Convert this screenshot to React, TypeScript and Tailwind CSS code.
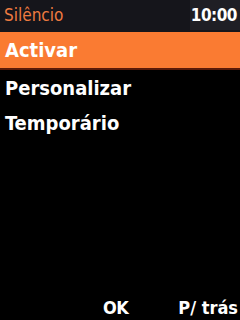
const items = ["Activar", "Personalizar", "Temporário"];

export default function App() {
  return (
    <div
      className="w-[240px] h-[320px] bg-black flex flex-col overflow-hidden"
      style={{ fontFamily: '"DejaVu Sans Condensed", "DejaVu Sans", sans-serif' }}
    >
      {/* barra de título */}
      <div className="h-[32px] bg-[#15151b] flex items-start justify-between">
        <span className="pl-[4px] text-[17px] leading-[30px] text-[#ee7a40]">Silêncio</span>
        <span className="w-[50px] h-[30px] bg-[#1f1f25] pr-[3px] text-right text-[17px] leading-[30px] font-bold tracking-[-0.5px] text-white">
          10:00
        </span>
      </div>

      {/* lista */}
      <div className="flex flex-col">
        {items.map((item, i) => (
          <div
            key={item}
            className={`pl-[5px] flex items-center text-[20px] font-bold text-white ${
              i === 0 ? "h-[38px] bg-[#fa7b32] border-b-2 border-[#5a1a08]" : "h-[35px]"
            }`}
          >
            {item}
          </div>
        ))}
      </div>

      {/* teclas de função */}
      <div className="mt-auto h-[26px] flex items-center justify-end text-[18px] font-bold text-white">
        <span className="mr-[50px] tracking-[-0.5px]">OK</span>
        <span className="mr-[2px]">P/ trás</span>
      </div>
    </div>
  );
}
